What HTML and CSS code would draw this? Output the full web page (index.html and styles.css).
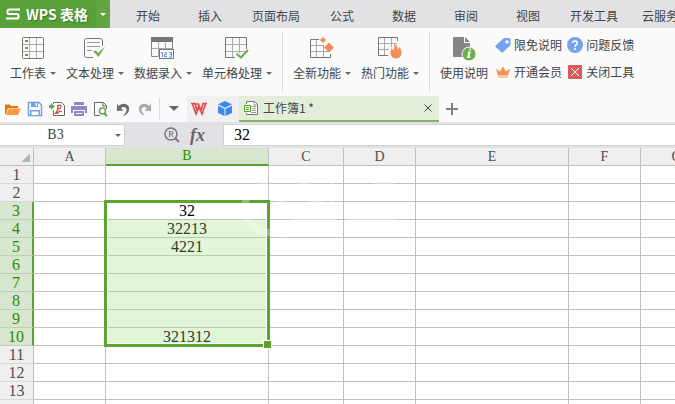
FILE: index.html
```html
<!DOCTYPE html>
<html lang="zh-CN">
<head>
    <meta charset="UTF-8">
    <meta name="viewport" content="width=device-width, initial-scale=1.0">
    <title>WPS 表格</title>
    <link rel="stylesheet" href="styles.css">
</head>
<body>
    <header class="menubar">
        <button class="app-button">
            <svg width="14" height="12" viewBox="0 0 14 12"><path d="M14 1.5H3Q1.5 1.5 1.5 3V4.5Q1.5 6 3 6H11Q12.5 6 12.5 7.5V9Q12.5 10.5 11 10.5H0" fill="none" stroke="#fff" stroke-width="2"/></svg>
            <span>WPS 表格</span>
        </button>
        <button class="app-menu" aria-label="菜单"><span class="arrow"></span></button>
        <nav class="tabs">
            <a href="#">开始</a>
            <a href="#">插入</a>
            <a href="#">页面布局</a>
            <a href="#">公式</a>
            <a href="#">数据</a>
            <a href="#">审阅</a>
            <a href="#">视图</a>
            <a href="#">开发工具</a>
            <a href="#">云服务</a>
        </nav>
    </header>

    <div class="ribbon">
        <div class="group">
            <button class="tool">
                <svg width="22" height="22" viewBox="0 0 22 22"><g fill="none"><path d="M7.5 1v20M14.5 1v20M1 7.5h20M1 14.5h20" stroke="#aaa"/><rect x=".5" y=".5" width="21" height="21" rx="1" stroke="#777"/></g><path d="M3 3h3v2H3zM3 10h3v2H3zM3 17h3v2H3z" fill="#5ba83a"/></svg>
                <span>工作表<i class="arrow"></i></span>
            </button>
            <button class="tool">
                <svg width="22" height="22" viewBox="0 0 22 22"><g fill="none"><path d="M9 20.5H2.5Q.5 20.5 .5 18.5V3.5Q.5 1.5 2.5 1.5H16Q18.5 1.5 18.5 4V9" stroke="#777"/><path d="M3 5.5h13M3 9.5h13M3 13.5h5" stroke="#999"/></g><path d="M9 14l3-.5 2 2.500L21 9.500 14.500 20z" fill="#70b050"/></svg>
                <span>文本处理<i class="arrow"></i></span>
            </button>
            <button class="tool">
                <svg width="24" height="22" viewBox="0 0 24 22"><path d="M7.5 5v14M14.5 5v7M.5 11.5h21" stroke="#aaa"/><path d="M.5 5v14.5h7M21.5 5v7" fill="none" stroke="#888"/><path d="M0 0h22v5H0z" fill="#777"/><rect x="8.5" y="12.5" width="14" height="9" fill="#fff" stroke="#777"/><path d="M10 15.500h1.500V20M13.500 15.500h2v2h-2v2h2.500M18 15.500h2.500V20H18M18.500 17.500h2" fill="none" stroke="#5a8ee0"/></svg>
                <span>数据录入<i class="arrow"></i></span>
            </button>
            <button class="tool">
                <svg width="24" height="22" viewBox="0 0 24 22"><g fill="none"><path d="M7.5 1v20M14.5 1v15M1 7.5h20M1 14.5h20" stroke="#aaa"/><path d="M10 20.5H.5V.5H21.5V12" stroke="#777"/><path d="M11.5 16.5l4.500 4L23 13" stroke="#70b050" stroke-width="2"/></g></svg>
                <span>单元格处理<i class="arrow"></i></span>
            </button>
        </div>
        <div class="group">
            <button class="tool">
                <svg width="24" height="22" viewBox="0 0 24 22"><g fill="none"><path d="M6.5 3v18M13.5 8v13M1 8.5h13M1 14.5h19" stroke="#aaa"/><path d="M9 2.5H.5v18H20.5V17" stroke="#777"/></g><path d="M13 0l3 3-3 3-3-3zM19 5.500l5 5-5 5-5-5z" fill="#f09058"/></svg>
                <span>全新功能<i class="arrow"></i></span>
            </button>
            <button class="tool">
                <svg width="24" height="22" viewBox="0 0 24 22"><g fill="none"><path d="M6.5 1v18M13.5 1v9M1 6.5h18M1 12.5h10" stroke="#aaa"/><path d="M10 18.5H.5V.5H19.5V4" stroke="#777"/></g><path d="M16 6.500c3 2 4 4 3.500 6 1-.2 1.500-1.500 1.500-2.500 2 2 3 4.500 2.500 7-.6 3-3 4.500-5.500 4.500s-5-1.500-5.500-4.500c-.4-2.500 1-4 .5-6 1 .5 1.700 1.500 2 2.500 1.500-2 1.700-4.500 1-7z" fill="#f09058"/></svg>
                <span>热门功能<i class="arrow"></i></span>
            </button>
        </div>
        <div class="group">
            <button class="tool">
                <svg width="24" height="24" viewBox="0 0 24 24"><path d="M1 0H12V6H18V20H1z" fill="#858585"/><path d="M13 0l5 5h-5z" fill="#858585"/><circle cx="17" cy="17" r="7" fill="#6eaf4d" stroke="#fafafa"/><path d="M16 15.500h1.500l-1.300 4.500h2M17.500 12.500h1.500" fill="none" stroke="#fff" stroke-width="2"/></svg>
                <span>使用说明</span>
            </button>
            <div class="links">
                <a href="#">
                    <svg width="16" height="16" viewBox="0 0 16 16"><path fill-rule="evenodd" d="M9 1h5q1.500 0 1.500 1.500V8L8 15.300q-.7.500-1.500 0L.7 10q-.7-.8 0-1.500zM12 3.200a1.700 1.700 0 1 0 .1 0z" fill="#76a2ee"/></svg>
                    <span>限免说明</span>
                </a>
                <a href="#">
                    <svg width="16" height="16" viewBox="0 0 16 16"><circle cx="8" cy="8" r="8" fill="#76a2ee"/><path d="M5.800 6Q5.800 4 8 4t2.200 2Q10.200 7.200 9 8 8 8.700 8 10M8 11v2" fill="none" stroke="#fff" stroke-width="1.600"/></svg>
                    <span>问题反馈</span>
                </a>
                <a href="#">
                    <svg width="16" height="16" viewBox="0 0 16 16"><path d="M1 4.500l4 3L8 2.500l3 5 4-3L13 11.500H3zM3 12.500h10v1H3z" fill="#ef9457"/></svg>
                    <span>开通会员</span>
                </a>
                <a href="#">
                    <svg width="16" height="16" viewBox="0 0 16 16"><rect x="1" y="1" width="14" height="14" rx="1" fill="#d95c5c"/><path d="M4 4l8 8M12 4l-8 8" stroke="#fff"/></svg>
                    <span>关闭工具</span>
                </a>
            </div>
        </div>
    </div>

    <div class="quickbar">
        <div class="quick-tools">
            <button aria-label="打开"><svg width="16" height="16" viewBox="0 0 16 16"><path d="M0 3.500h5l1 1.500h7v2H3L1 13H0z" fill="#e8780c"/><path d="M4 7.500h12L13 14H1z" fill="#ff9a3c"/></svg></button>
            <button aria-label="保存"><svg width="16" height="16" viewBox="0 0 16 16"><path d="M1.500 1.500H12L14.500 4V14.500h-13z" fill="#fff" stroke="#6e9fe8" stroke-width="1.500"/><path d="M4 1h7v5H4zM3 9h10v6H3z" fill="#6e9fe8"/><path d="M8.500 2H10v3H8.500zM4.500 10.500h7V14h-7z" fill="#fff"/></svg></button>
            <button aria-label="输出为PDF"><svg width="16" height="16" viewBox="0 0 16 16"><path d="M4.500 3V1.500h8l3 3v10h-11V9" fill="#fff" stroke="#666"/><path d="M0 4h2V2l4 3.500L2 9V7H0z" fill="#65a846"/><path d="M8 5q4-2 4 .5T8.500 8M9 5Q9 10 6.500 12.500q3 0 4-2.500 1 0 2.500 1" fill="none" stroke="#cc4949" stroke-width="1.200"/></svg></button>
            <button aria-label="打印"><svg width="16" height="16" viewBox="0 0 16 16"><path d="M3 1h10v3H3zM0 5h16v7h-2V9H2v3H0zM3 10h10v5H3z" fill="#8d87c5"/><path d="M5 12h6v1H5z" fill="#fff"/></svg></button>
            <button aria-label="打印预览"><svg width="16" height="16" viewBox="0 0 16 16"><path d="M7 14.500H1.500v-13h9l3 3V8M10 2v3h3" fill="none" stroke="#666"/><circle cx="9.500" cy="10" r="3" fill="none" stroke="#65a846" stroke-width="1.500"/><path d="M11.500 12.500L14 15" stroke="#65a846" stroke-width="2"/></svg></button>
            <button aria-label="撤销"><svg width="16" height="16" viewBox="0 0 16 16"><path d="M2 2l1.500 3Q8 1.500 11.500 3.500T14 9Q13.500 13 8 15q4-4 3.500-7Q10 4.500 6 7l2.500 2.500L2 10z" fill="#6a6a6a"/></svg></button>
            <button aria-label="恢复"><svg width="16" height="16" viewBox="0 0 16 16"><path d="M14 2l-1.500 3Q8 1.500 4.500 3.500T2 9Q2.500 13 8 15 4 11 4.500 8 6 4.500 10 7L7.500 9.500 14 10z" fill="#a8a8a8"/></svg></button>
        </div>
        <button class="quick-more" aria-label="更多"><svg width="10" height="6" viewBox="0 0 10 6"><path d="M0 0h10L5 5z" fill="#666"/></svg></button>
        <div class="home-tabs">
            <button aria-label="WPS"><svg width="16" height="14" viewBox="0 0 16 14"><path d="M0 1.500h4l2 7 2-5 2 5 2-7h4M1.500 2l3.500 10L8 5l3 7 3.500-10M5 2l3 0" fill="none" stroke="#e8464a" stroke-width="1.600"/></svg></button>
            <button aria-label="在线"><svg width="14" height="16" viewBox="0 0 14 16"><path d="M7 0l7 3.300L7 6.700 0 3.300zM0 4.700l6.500 3V15L0 12zM14 4.700l-6.500 3V15l6.500-3z" fill="#3e87ee"/></svg></button>
        </div>
        <div class="doc-tab">
            <svg width="14" height="14" viewBox="0 0 14 14"><path d="M2.500 3V.5h8l3 3v10h-11V12" fill="#fff" stroke="#777"/><path d="M7 5.500h5M8 7.500h4M8 9.500h4M7 11.500h5M10 1v3h3" fill="none" stroke="#999"/><path d="M.5 4.500h6v6h-6zM2 6.500h3M2 8.500h3" fill="#fff" stroke="#4da129"/></svg>
            <span>工作簿1 *</span>
            <button aria-label="关闭"><svg width="8" height="8" viewBox="0 0 8 8"><path d="M.5 .5l7 7M7.500 .5l-7 7" stroke="#444"/></svg></button>
        </div>
        <button class="new-tab" aria-label="新建"><svg width="12" height="12" viewBox="0 0 12 12"><path d="M6 0v12M0 6h12" stroke="#808080" stroke-width="2"/></svg></button>
    </div>

    <div class="formula-bar">
        <div class="name-box">
            <input type="text" value="B3" aria-label="名称框">
            <span class="arrow"></span>
        </div>
        <div class="formula-tools">
            <button aria-label="浏览公式结果"><svg width="16" height="16" viewBox="0 0 16 16"><circle cx="7" cy="7" r="6" fill="none" stroke="#777" stroke-width="1.500"/><path d="M11 11l4 4" stroke="#777" stroke-width="2"/><path d="M5.500 10V4.500h2q1.500 0 1.500 1.300T7.500 7h-2M7.500 7L9 10" fill="none" stroke="#777"/></svg></button>
            <button class="fx">fx</button>
        </div>
        <input class="formula" type="text" value="32" aria-label="编辑栏">
    </div>

    <main class="sheet">
        <table>
            <colgroup>
                <col class="col-index"><col class="col-normal"><col class="col-b"><col class="col-c"><col class="col-normal"><col class="col-e"><col class="col-normal"><col class="col-normal">
            </colgroup>
            <thead>
                <tr><th class="corner"></th><th>A</th><th class="active">B</th><th>C</th><th>D</th><th>E</th><th>F</th><th>G</th></tr>
            </thead>
            <tbody>
                <tr><th>1</th><td></td><td></td><td></td><td></td><td></td><td></td><td></td></tr>
                <tr><th>2</th><td></td><td></td><td></td><td></td><td></td><td></td><td></td></tr>
                <tr class="active"><th>3</th><td></td><td class="current">32<div class="selection"></div></td><td></td><td></td><td></td><td></td><td></td></tr>
                <tr class="active"><th>4</th><td></td><td class="picked">32213</td><td></td><td></td><td></td><td></td><td></td></tr>
                <tr class="active"><th>5</th><td></td><td class="picked">4221</td><td></td><td></td><td></td><td></td><td></td></tr>
                <tr class="active"><th>6</th><td></td><td class="picked"></td><td></td><td></td><td></td><td></td><td></td></tr>
                <tr class="active"><th>7</th><td></td><td class="picked"></td><td></td><td></td><td></td><td></td><td></td></tr>
                <tr class="active"><th>8</th><td></td><td class="picked"></td><td></td><td></td><td></td><td></td><td></td></tr>
                <tr class="active"><th>9</th><td></td><td class="picked"></td><td></td><td></td><td></td><td></td><td></td></tr>
                <tr class="active"><th>10</th><td></td><td class="picked">321312</td><td></td><td></td><td></td><td></td><td></td></tr>
                <tr><th>11</th><td></td><td></td><td></td><td></td><td></td><td></td><td></td></tr>
                <tr><th>12</th><td></td><td></td><td></td><td></td><td></td><td></td><td></td></tr>
                <tr><th>13</th><td></td><td></td><td></td><td></td><td></td><td></td><td></td></tr>
                <tr><th></th><td></td><td></td><td></td><td></td><td></td><td></td><td></td></tr>
            </tbody>
        </table>
        <svg class="watermark" width="160" height="72" viewBox="0 0 160 72"><g fill="none" stroke="#fff" stroke-opacity=".3" stroke-width="7"><path d="M28 14Q2 20 5 42T45 64"/><path d="M38 30h8M58 12h12M70 30h14M92 8v34M134 12h20M50 48h46M106 48h52" stroke-width="4"/></g></svg>
    </main>
</body>
</html>
```

FILE: styles.css
```css
* {
    box-sizing: border-box;
}

body {
    margin: 0;
    height: 100vh;
    overflow: hidden;
    display: flex;
    flex-direction: column;
    background: #fff;
    color: #444;
    font-family: "Noto Sans CJK SC", sans-serif;
    font-size: 12px;
    line-height: 16px;
}

button, input {
    margin: 0;
    padding: 0;
    border: none;
    background: none;
    color: inherit;
    font: inherit;
}

a {
    color: inherit;
    text-decoration: none;
}

svg {
    display: block;
    flex: none;
}

.arrow {
    display: inline-block;
    border: 3px solid transparent;
    border-top-color: #666;
    border-bottom: 0;
}

/* top menu */
.menubar {
    display: flex;
    flex: none;
    height: 28px;
    background: #e2e2e4;
    white-space: nowrap;
}

.app-button {
    display: flex;
    flex: none;
    align-items: center;
    gap: 6px;
    width: 96px;
    padding-left: 6px;
    background: #58a038;
    color: #fff;
    font-size: 14px;
    font-weight: bold;
    text-shadow: 1px 1px 1px #3b7a22;
}

.app-menu {
    display: flex;
    flex: none;
    align-items: center;
    justify-content: center;
    width: 14px;
    background: #62a644;
}

.app-menu .arrow {
    border-top-color: #fff;
}

.tabs {
    display: flex;
    margin-left: 7px;
}

.tabs a {
    flex: none;
    min-width: 62px;
    padding: 8px 11px 0;
    text-align: center;
}

/* ribbon */
.ribbon {
    display: flex;
    flex: none;
    height: 66px;
    padding: 4px 0 2px 5px;
    background: #fafafa;
    white-space: nowrap;
}

.group {
    display: flex;
    padding-right: 5px;
}

.group + .group {
    padding-left: 5px;
    border-left: 1px solid #dcdcde;
}

.tool {
    display: flex;
    flex-direction: column;
    align-items: center;
    justify-content: space-between;
    padding: 5px 5px 11px;
}

.tool .arrow {
    margin-left: 4px;
    vertical-align: 3px;
}

.links {
    display: grid;
    grid-template-columns: auto auto;
    column-gap: 5px;
    row-gap: 11px;
    align-content: start;
    padding: 5px 0 0 2px;
}

.links a {
    display: flex;
    align-items: center;
    gap: 3px;
}

/* quick access bar and document tabs */
.quickbar {
    display: flex;
    flex: none;
    align-items: stretch;
    height: 28px;
    padding-top: 2px;
    background: #fafafa;
}

.quickbar button {
    display: flex;
    align-items: center;
    justify-content: center;
}

.quick-tools {
    display: flex;
    gap: 6px;
    padding: 0 6px 0 5px;
    border-right: 1px solid #ddd;
    margin: 2px 0;
}

.quick-more {
    width: 27px;
}

.home-tabs {
    display: flex;
    width: 52px;
    gap: 11px;
    padding-left: 4px;
    background: #f0f0f1;
}

.doc-tab {
    display: flex;
    align-items: center;
    gap: 5px;
    width: 200px;
    padding: 0 7px 0 5px;
    background: #e2eeda;
    border-bottom: 2px solid #82b366;
}

.doc-tab button {
    margin-left: auto;
}

.new-tab {
    width: 26px;
}

/* formula bar */
.formula-bar {
    display: flex;
    flex: none;
    height: 26px;
    padding: 2px 0;
    background: #e2e2e6;
    font-family: "Liberation Serif", serif;
    font-size: 16px;
}

.name-box {
    display: flex;
    align-items: center;
    width: 125px;
    padding-right: 3px;
    background: #fff;
    border: 1px solid #d0d0d8;
    border-left: 0;
}

.name-box input {
    flex: 1;
    min-width: 0;
    padding-right: 4px;
    text-align: center;
    font-size: 14px;
}

.formula-tools {
    display: flex;
    align-items: center;
    justify-content: flex-end;
    gap: 10px;
    width: 98px;
    padding-right: 18px;
}

.fx {
    color: #666;
    font-size: 18px;
    font-style: italic;
    font-weight: bold;
}

.formula {
    flex: 1;
    min-width: 0;
    padding-left: 10px;
    background: #fff;
    border: 1px solid #d0d0d8;
    border-right: 0;
    color: #000;
}

/* sheet */
.sheet {
    position: relative;
    flex: 1;
    min-height: 0;
    overflow: hidden;
    --row: 18px;
}

table {
    width: 713px;
    table-layout: fixed;
    border-collapse: separate;
    border-spacing: 0;
    font-family: "Liberation Serif", serif;
    font-size: 16px;
    text-align: center;
}

.col-index {
    width: 34px;
}

.col-normal {
    width: 72px;
}

.col-b {
    width: 163px;
}

.col-c {
    width: 75px;
}

.col-e {
    width: 153px;
}

th, td {
    height: var(--row);
    padding: 0;
    border-right: 1px solid #c0c0c0;
    border-bottom: 1px solid #c0c0c0;
    line-height: 16px;
}

th {
    background: #efefef;
    color: #505050;
    font-weight: normal;
}

thead th {
    font-size: 14px;
}

thead th.active {
    background: #d6e6cf;
    border-bottom: 2px solid #5aa532;
    color: #2e8b00;
}

tbody th {
    border-bottom-color: #d8d8d8;
}

tbody .active th {
    background: #d6e6cf;
    border-right: 2px solid #5aa532;
    border-bottom-color: #c0d0b8;
    color: #2e8b00;
}

.corner {
    background: linear-gradient(135deg, transparent 50%, #b4b4b4 50%) right 3px bottom 3px / 9px 9px no-repeat #efefef;
}

.current {
    position: relative;
    color: #000;
}

.picked {
    background: #e2f5d6;
    border-bottom-color: #b9cdad;
    color: #304028;
}

.selection {
    position: absolute;
    top: -2px;
    left: -2px;
    right: -2px;
    height: calc(var(--row) * 8 + 3px);
    border: 3px solid #5aa532;
    box-shadow: inset 0 0 0 1px #fff;
}

.selection::after {
    content: "";
    position: absolute;
    right: -5px;
    bottom: -5px;
    width: 7px;
    height: 7px;
    background: #5aa532;
    border: 1px solid #fff;
}

.watermark {
    position: absolute;
    top: 22px;
    left: 240px;
}
```
